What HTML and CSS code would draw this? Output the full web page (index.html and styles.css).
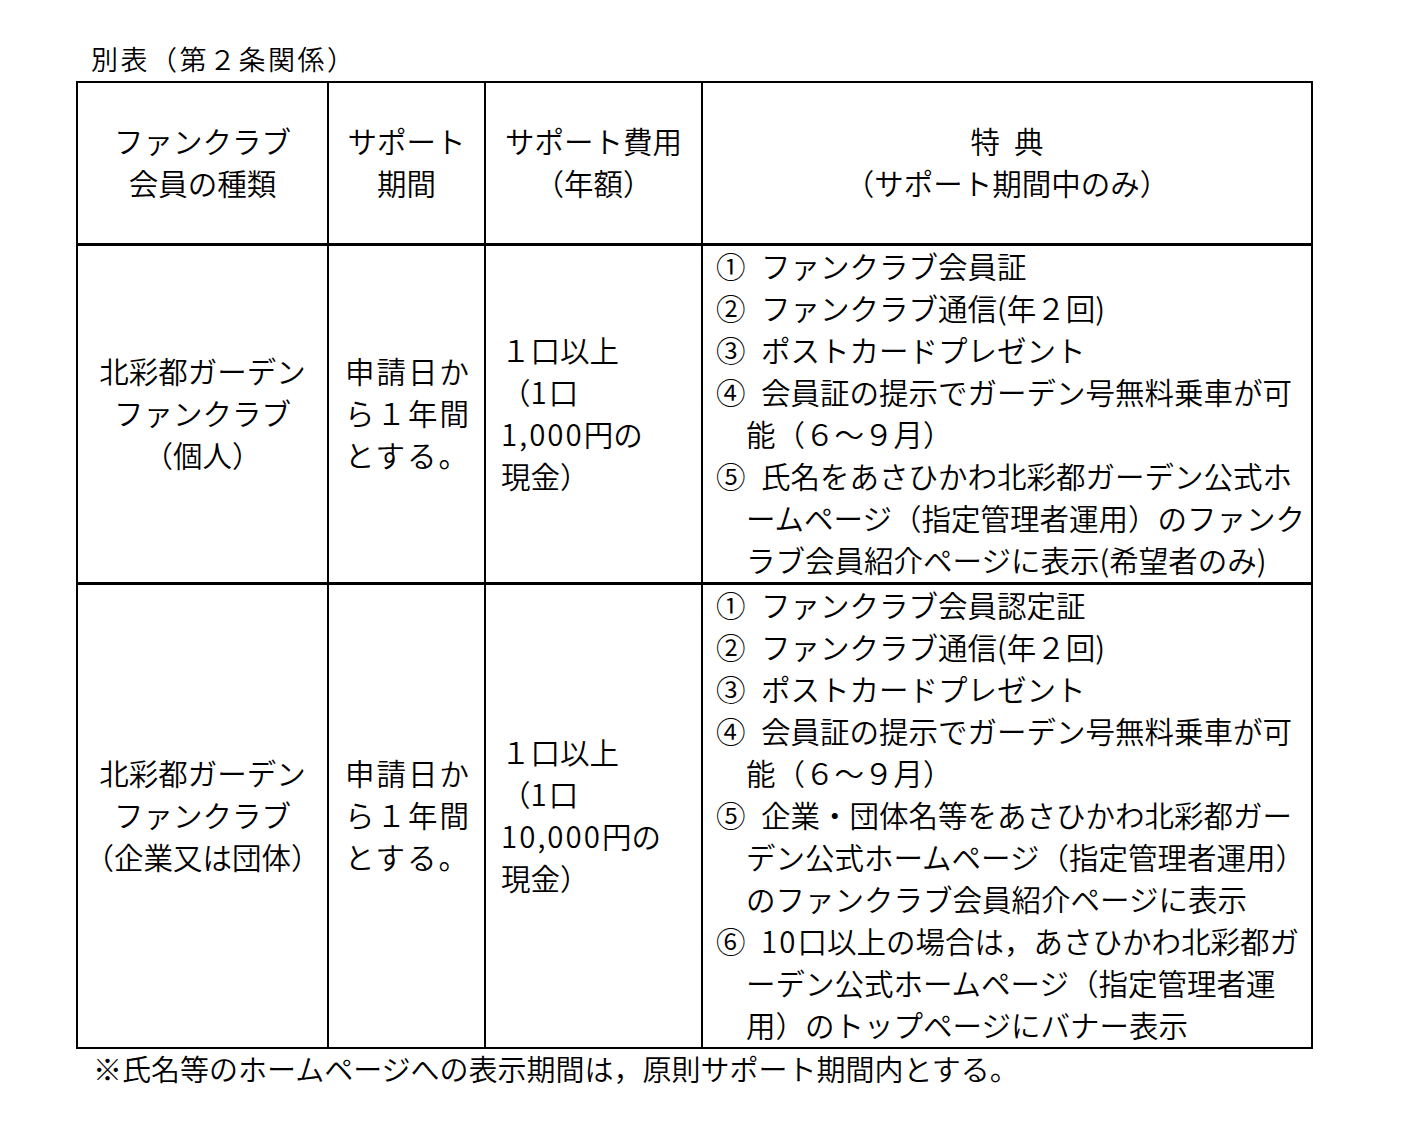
FILE: index.html
```html
<!DOCTYPE html>
<html lang="ja">
<head>
<meta charset="utf-8">
<title>別表（第２条関係）</title>
<link rel="stylesheet" href="styles.css">
</head>
<body>
<div class="page">
  <p class="title">別表（第２条関係）</p>
  <div class="tbl">
    <div class="c center">
      <div>ファンクラブ</div>
      <div>会員の種類</div>
    </div>
    <div class="c center">
      <div>サポート</div>
      <div>期間</div>
    </div>
    <div class="c center">
      <div>サポート費用</div>
      <div>（年額）</div>
    </div>
    <div class="c center">
      <div>特<span class="hsp"></span>典</div>
      <div>（サポート期間中のみ）</div>
    </div>

    <div class="c center">
      <div>北彩都ガーデン</div>
      <div>ファンクラブ</div>
      <div>（個人）</div>
    </div>
    <div class="c period">
      <div>申請日か</div>
      <div>ら１年間</div>
      <div>とする。</div>
    </div>
    <div class="c fee">
      <div>１口以上</div>
      <div>（<span class="dg">1</span>口</div>
      <div><span class="dg">1,000</span>円の</div>
      <div>現金）</div>
    </div>
    <div class="c ben">
      <div class="item"><span class="num">①</span>ファンクラブ会員証</div>
      <div class="item"><span class="num">②</span>ファンクラブ通信(年２回)</div>
      <div class="item"><span class="num">③</span>ポストカードプレゼント</div>
      <div class="item"><span class="num">④</span>会員証の提示でガーデン号無料乗車が可<br>能（６～９月）</div>
      <div class="item"><span class="num">⑤</span>氏名をあさひかわ北彩都ガーデン公式ホ<br>ームページ（指定管理者運用）のファンク<br>ラブ会員紹介ページに表示(希望者のみ)</div>
    </div>

    <div class="c center">
      <div>北彩都ガーデン</div>
      <div>ファンクラブ</div>
      <div>（企業又は団体）</div>
    </div>
    <div class="c period">
      <div>申請日か</div>
      <div>ら１年間</div>
      <div>とする。</div>
    </div>
    <div class="c fee">
      <div>１口以上</div>
      <div>（<span class="dg">1</span>口</div>
      <div><span class="dg">10,000</span>円の</div>
      <div>現金）</div>
    </div>
    <div class="c ben">
      <div class="item"><span class="num">①</span>ファンクラブ会員認定証</div>
      <div class="item"><span class="num">②</span>ファンクラブ通信(年２回)</div>
      <div class="item"><span class="num">③</span>ポストカードプレゼント</div>
      <div class="item"><span class="num">④</span>会員証の提示でガーデン号無料乗車が可<br>能（６～９月）</div>
      <div class="item"><span class="num">⑤</span>企業・団体名等をあさひかわ北彩都ガー<br>デン公式ホームページ（指定管理者運用）<br>のファンクラブ会員紹介ページに表示</div>
      <div class="item"><span class="num">⑥</span><span class="dg">10</span>口以上の場合は，あさひかわ北彩都ガ<br>ーデン公式ホームページ（指定管理者運<br>用）のトップページにバナー表示</div>
    </div>
  </div>
  <p class="note">※氏名等のホームページへの表示期間は，原則サポート期間内とする。</p>
</div>
</body>
</html>
```

FILE: styles.css
```css
html, body {
  margin: 0;
  padding: 0;
  background: #fff;
}

body {
  color: #000;
  font-family: "Noto Sans CJK JP", "Noto Sans", sans-serif;
  font-size: 29.5px;
  font-weight: 350;
}

.page {
  padding: 38px 0 0 76px;
}

.title {
  margin: 0 0 1px 15px;
  font-size: 27px;
  line-height: 42px;
  letter-spacing: 2.5px;
}

.tbl {
  display: grid;
  width: max-content;
  grid-template-columns: 249px 155px 215px 608px;
  grid-template-rows: 160px auto auto;
  gap: 3px 2px;
  padding: 2px;
  background: #000;
}

.c {
  background: #fff;
  display: flex;
  flex-direction: column;
  justify-content: center;
  line-height: 42px;
  white-space: nowrap;
  padding-bottom: 4px;
}

.center {
  align-items: center;
  text-align: center;
}

.hsp {
  display: inline-block;
  width: 14px;
}

.period {
  padding-left: 16px;
  letter-spacing: 2px;
}

.fee {
  padding-left: 15px;
}

.dg {
  letter-spacing: 2px;
}

.ben {
  padding-left: 13px;
  padding-bottom: 2px;
  justify-content: flex-start;
}

.item {
  padding-left: 30px;
  text-indent: -30px;
}

.item:first-child {
  margin-top: -2px;
}

.num {
  display: inline-block;
  width: 45px;
  text-indent: 0;
}

.note {
  margin: -2px 0 0 17px;
  font-size: 29px;
  line-height: 42px;
}
```
